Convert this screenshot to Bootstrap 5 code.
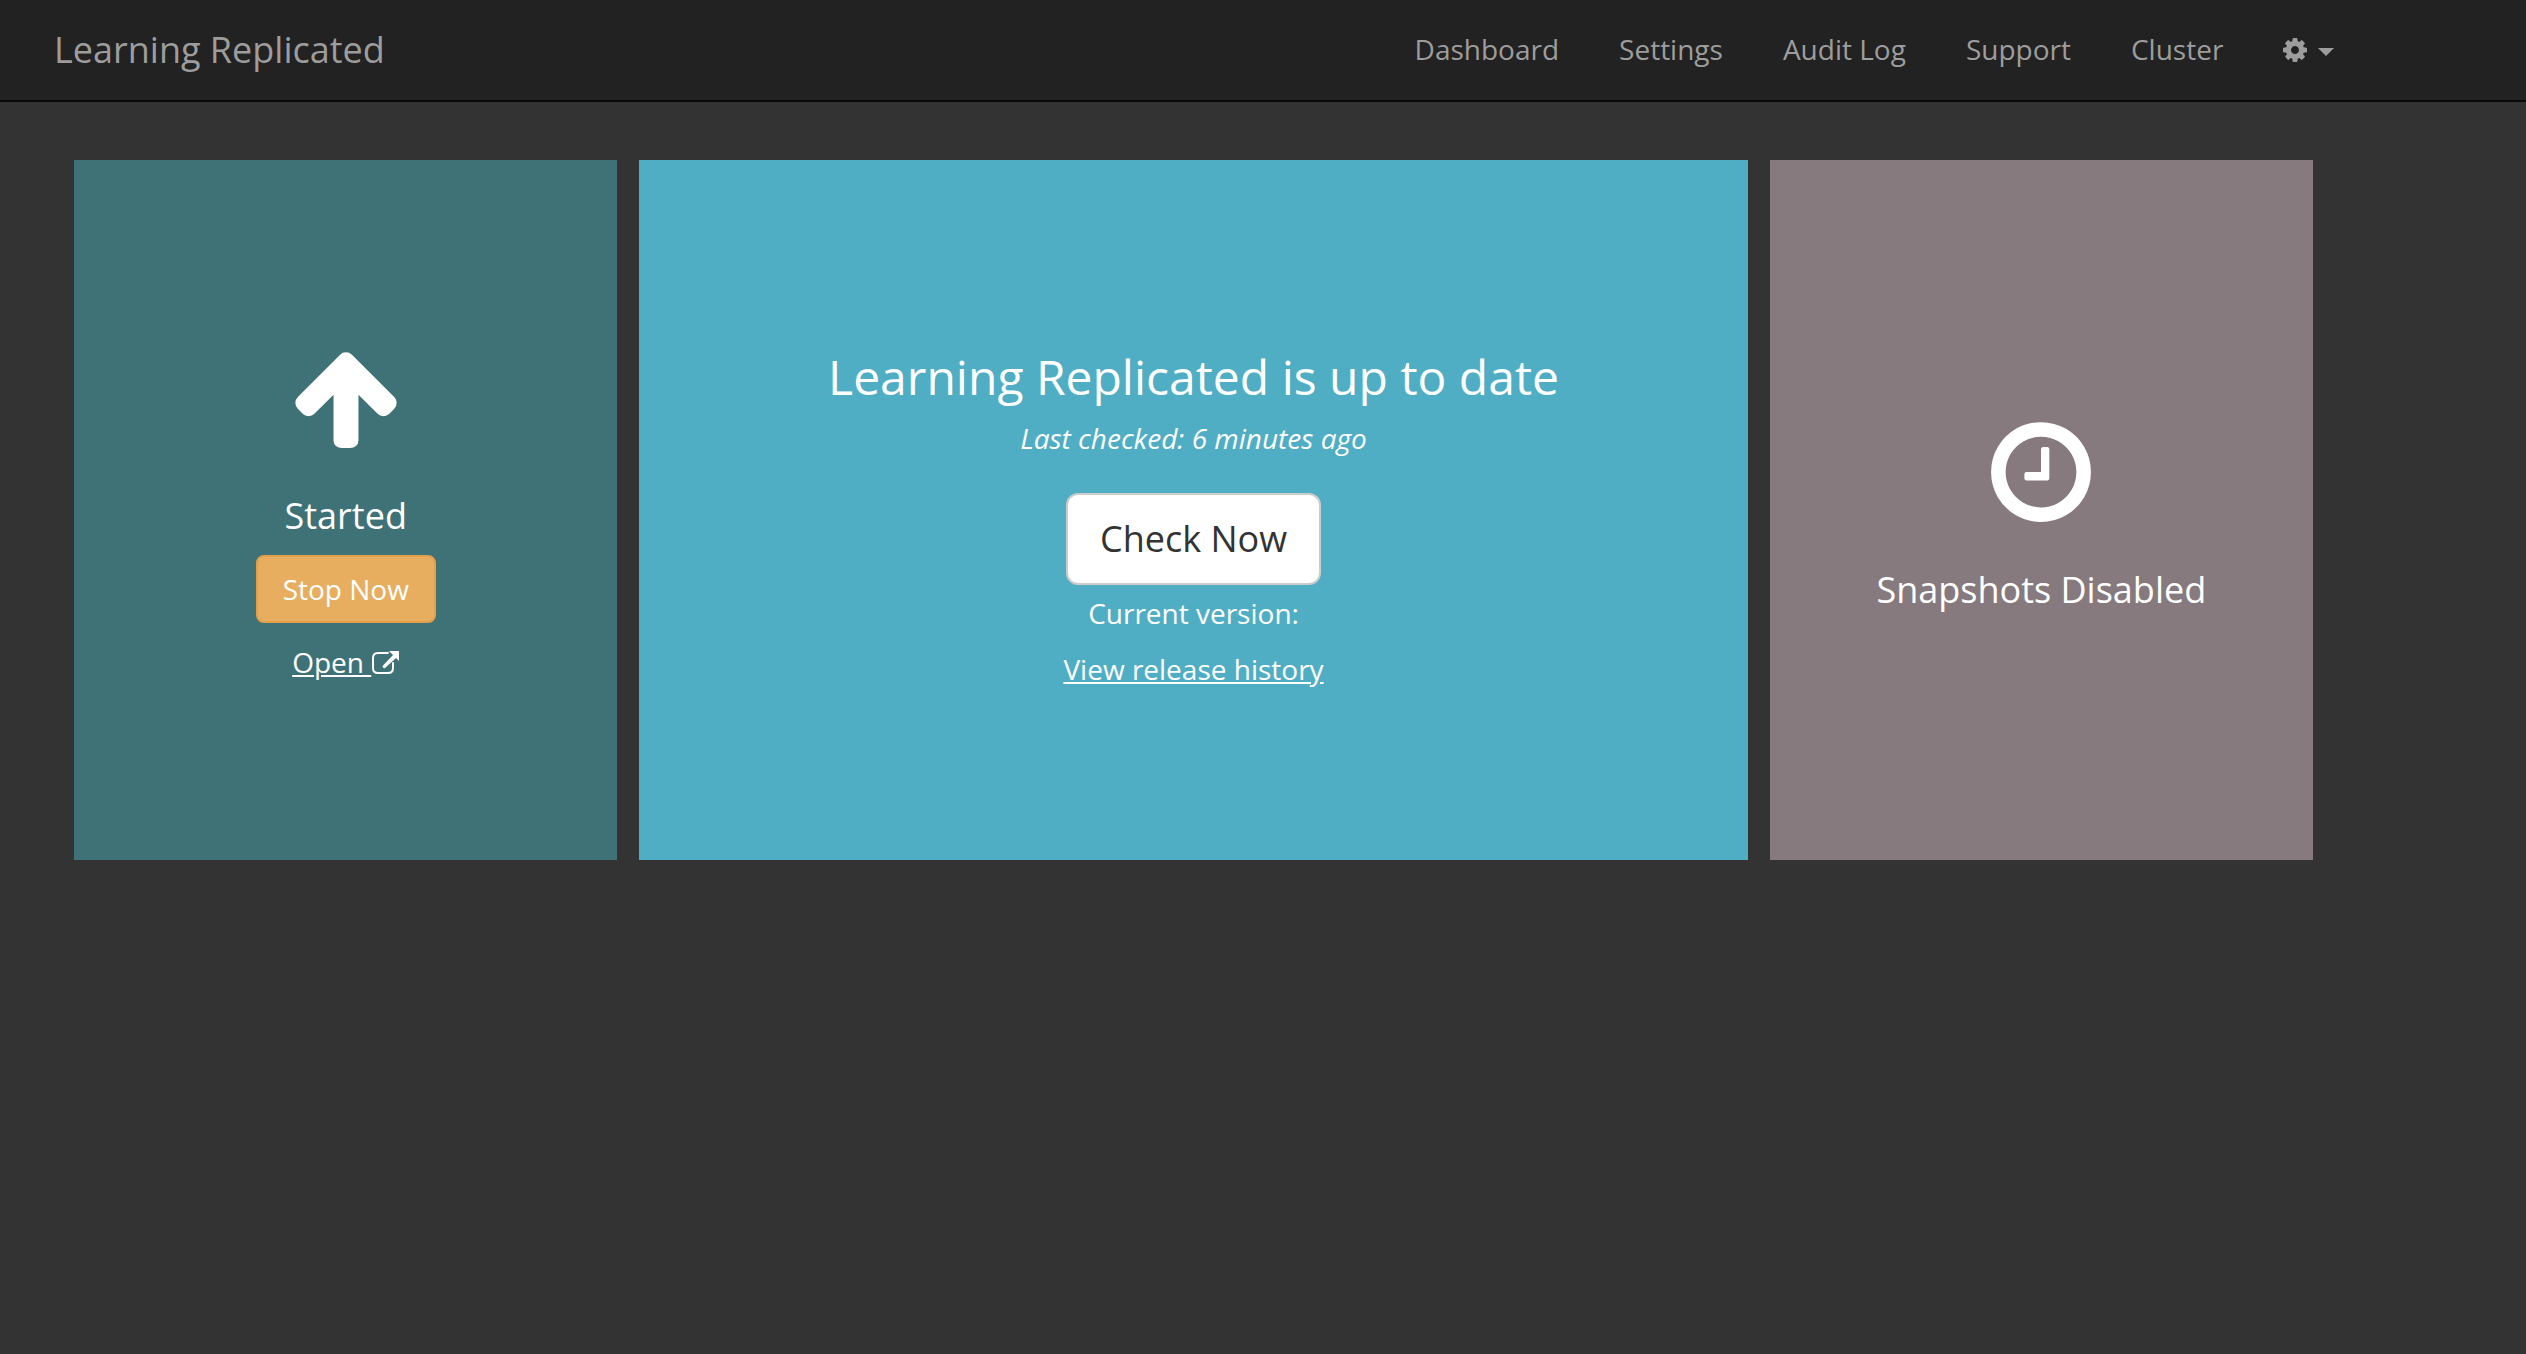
<!DOCTYPE html>
<html lang="en">
<head>
<meta charset="utf-8">
<meta name="viewport" content="width=device-width, initial-scale=1">
<title>Learning Replicated</title>
<link rel="stylesheet" href="https://cdn.jsdelivr.net/npm/bootstrap@5.3.0/dist/css/bootstrap.min.css">
<style>
  body { background: #333; color: #fff; font-family: "Open Sans", sans-serif; font-size: 28px; line-height: 40px; }
  .topbar { background: #222; border-bottom: 2px solid #080808; padding: 0 6.4% 0 54px; }
  .topbar .navbar-brand { color: #9d9d9d; font-size: 36px; line-height: 40px; padding: 30px 0; margin: 0; }
  .topbar .navbar-nav .nav-link { color: #9d9d9d; padding: 29px 30px 31px; line-height: 40px; }
  .topbar .navbar-nav .nav-link:hover, .topbar .navbar-brand:hover { color: #fff; }
  .topbar .navbar-nav .dropdown-toggle { background: none; border: 0; display: flex; align-items: center; gap: 9px; height: 100px; padding: 0 30px 0 28px; }
  .topbar .dropdown-toggle::after { margin: 4px 0 0; border-top: 8px solid; border-left: 8px solid transparent; border-right: 8px solid transparent; vertical-align: 0; }
  .glyph { width: 28px; height: 28px; fill: currentColor; }
  .dash { padding: 58px 8% 0 2.5%; }
  .dash .row { --bs-gutter-x: 22px; }
  .tile { min-height: 700px; }
  .tile-app { background: #3e7277; padding-bottom: 2px; }
  .tile-update { background: #4faec4; padding-top: 19px; }
  .tile-snap { background: #867a7f; }
  .tile-icon { width: 104px; height: 112px; fill: #fff; margin-bottom: 48px; }
  .tile-title { font-size: 36px; line-height: 40px; font-weight: 400; margin: 0; }
  .update-title { font-size: 48px; line-height: 52px; font-weight: 400; margin: 0 0 15px; }
  .tile a { color: #fff; }
  .btn-stop { --bs-btn-color: #fff; --bs-btn-bg: #e7ae60; --bs-btn-border-color: #e2a04a; --bs-btn-hover-color: #fff; --bs-btn-hover-bg: #e2a04a; border-width: 2px; border-radius: 8px; font-size: 28px; line-height: 40px; padding: 12px 25px; margin: 19px 0; }
  .btn-check-now { --bs-btn-color: #333; --bs-btn-bg: #fff; --bs-btn-border-color: #ccc; --bs-btn-hover-bg: #e6e6e6; border-width: 2px; border-radius: 12px; font-size: 36px; line-height: 48px; padding: 20px 32px; margin: 35px 0 8px; }
</style>
<script src="https://cdn.jsdelivr.net/npm/bootstrap@5.3.0/dist/js/bootstrap.bundle.min.js"></script>
</head>
<body>
<nav class="navbar navbar-expand topbar">
  <a class="navbar-brand" href="#">Learning Replicated</a>
  <ul class="navbar-nav ms-auto">
    <li class="nav-item"><a class="nav-link" href="#">Dashboard</a></li>
    <li class="nav-item"><a class="nav-link" href="#">Settings</a></li>
    <li class="nav-item"><a class="nav-link" href="#">Audit Log</a></li>
    <li class="nav-item"><a class="nav-link" href="#">Support</a></li>
    <li class="nav-item"><a class="nav-link" href="#">Cluster</a></li>
    <li class="nav-item dropdown">
      <button class="nav-link dropdown-toggle" type="button" data-bs-toggle="dropdown" aria-expanded="false" aria-label="Options">
        <svg class="glyph" viewBox="0 0 1792 1792" aria-hidden="true"><path d="M1152 896q0-106-75-181t-181-75-181 75-75 181 75 181 181 75 181-75 75-181zm512-109v222q0 12-8 23t-20 13l-185 28q-19 54-39 91 35 50 107 138 10 12 10 25t-9 23q-27 37-99 108t-94 71q-12 0-26-9l-138-108q-44 23-91 38-16 136-29 186-7 28-36 28h-222q-14 0-24.5-8.5t-11.5-21.5l-28-184q-49-16-90-37l-141 107q-10 9-25 9-14 0-25-11-126-114-165-168-7-10-7-23 0-12 8-23 15-21 51-66.5t54-70.5q-27-50-41-99l-183-27q-13-2-21-12.5t-8-23.5v-222q0-12 8-23t19-13l186-28q14-46 39-92-40-57-107-138-10-12-10-24 0-10 9-23 26-36 98.5-107.5t94.5-71.5q13 0 26 10l138 107q44-23 91-38 16-136 29-186 7-28 36-28h222q14 0 24.5 8.5t11.5 21.5l28 184q49 16 90 37l142-107q9-9 24-9 13 0 25 10 129 119 165 170 7 8 7 22 0 12-8 23-15 21-51 66.5t-54 70.5q26 50 41 98l183 28q13 2 21 12.5t8 23.5z"/></svg>
      </button>
    </li>
  </ul>
</nav>
<main class="dash">
  <div class="row mx-0">
    <section class="col-3">
      <div class="tile tile-app d-flex flex-column align-items-center justify-content-center text-center">
        <svg class="tile-icon" viewBox="96 -59 1600 1723" aria-hidden="true"><path d="M1675 971q0 51-37 90l-75 75q-38 38-91 38-54 0-90-38l-294-293v704q0 52-37.5 84.5t-90.5 32.5h-128q-53 0-90.5-32.5t-37.5-84.5v-704l-294 293q-36 38-90 38t-90-38l-75-75q-38-38-38-90 0-53 38-91l651-651q35-37 90-37 54 0 91 37l651 651q37 39 37 91z"/></svg>
        <h2 class="tile-title">Started</h2>
        <button class="btn btn-stop" type="button">Stop Now</button>
        <a class="d-inline-flex align-items-center" href="#"><span>Open&nbsp;</span><svg class="glyph" viewBox="0 0 28 28" aria-hidden="true"><path d="M17 5H7Q2 5 2 10V20Q2 25 7 25H17Q22 25 22 20V15" fill="none" stroke="currentColor" stroke-width="2" stroke-linecap="round"/><path d="M18 3H28V13L25 10L14 20Q13 20.500 12 19.500Q11 18.500 12 17.500L22 7Z"/></svg></a>
      </div>
    </section>
    <section class="col-6">
      <div class="tile tile-update d-flex flex-column align-items-center justify-content-center text-center">
        <h1 class="update-title">Learning Replicated is up to date</h1>
        <em>Last checked: 6 minutes ago</em>
        <button class="btn btn-check-now" type="button">Check Now</button>
        <p class="mb-3">Current version:</p>
        <a href="#">View release history</a>
      </div>
    </section>
    <section class="col-3">
      <div class="tile tile-snap d-flex flex-column align-items-center justify-content-center text-center">
        <svg class="tile-icon" viewBox="96 -59 1600 1723" aria-hidden="true"><path d="M1024 544v448q0 14-9 23t-23 9h-320q-14 0-23-9t-9-23v-64q0-14 9-23t23-9h224v-352q0-14 9-23t23-9h64q14 0 23 9t9 23zm416 352q0-148-73-273t-198-198-273-73-273 73-198 198-73 273 73 273 198 198 273 73 273-73 198-198 73-273zm224 0q0 209-103 385.5t-279.5 279.5-385.5 103-385.5-103-279.5-279.5-103-385.5 103-385.5 279.5-279.5 385.5-103 385.5 103 279.5 279.5 103 385.5z"/></svg>
        <h2 class="tile-title">Snapshots Disabled</h2>
      </div>
    </section>
  </div>
</main>
</body>
</html>
